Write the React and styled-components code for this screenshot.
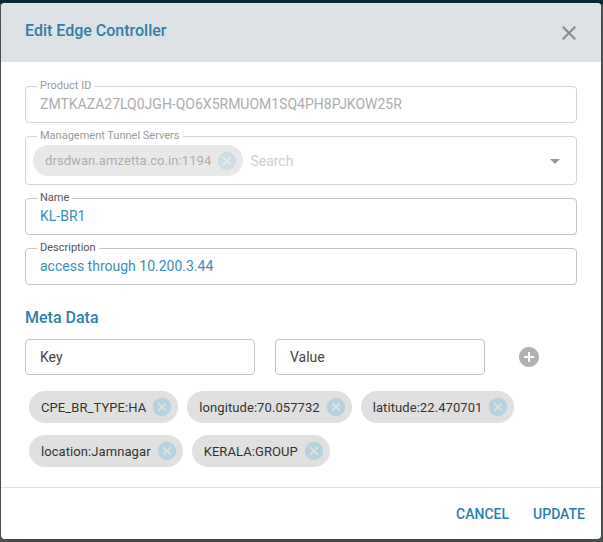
import React from "react";
import styled, { createGlobalStyle } from "styled-components";

const GlobalStyle = createGlobalStyle`
  html, body { margin: 0; padding: 0; }
  body { font-family: Roboto, "Liberation Sans", Arial, sans-serif; }
  * { box-sizing: border-box; }
`;

const Backdrop = styled.div`
  width: 603px;
  height: 542px;
  padding: 3px 2px 3px 1px;
  background: linear-gradient(to bottom, #0c2737 0, #0c2737 4px, #4d5154 4px);
  display: flex;
`;

const Dialog = styled.div`
  flex: 1;
  background: #fff;
  border-radius: 4px;
  overflow: hidden;
  display: flex;
  flex-direction: column;
  box-shadow: 0 11px 15px -7px rgba(0, 0, 0, 0.2);
`;

const Header = styled.div`
  height: 59px;
  background: #dde2e6;
  display: flex;
  align-items: center;
  justify-content: space-between;
  padding: 0 20px 0 24px;
`;

const Title = styled.h2`
  margin: 0;
  font-size: 16px;
  font-weight: 500;
  color: #2f7eab;
  padding-bottom: 4px;
`;

const IconButton = styled.button`
  border: 0;
  background: none;
  padding: 0;
  display: flex;
  color: ${({ color }) => color || "#8a8a8a"};
  cursor: pointer;
`;

const Body = styled.div`
  flex: 1;
  padding: 18px 24px 0 24px;
  display: flex;
  flex-direction: column;
`;

const Field = styled.fieldset`
  margin: 0 0 7px 0;
  padding: ${({ $pad }) => $pad || "2px 14px 10px 14px"};
  border: 1px solid ${({ disabled }) => (disabled ? "#d4d4d4" : "#c4c4c4")};
  border-radius: 4px;
  min-width: 0;
`;

const Legend = styled.legend`
  margin-left: ${({ $shift }) => $shift || "-3px"};
  padding: 0 3px;
  font-size: 11px;
  line-height: 12px;
  color: ${({ $muted }) => ($muted ? "#9a9a9a" : "#555")};
`;

const Value = styled.div`
  font-size: 14px;
  line-height: 18px;
  padding-top: 1px;
  margin-bottom: -1px;
  color: ${({ $muted }) => ($muted ? "#adadad" : "#3b8dba")};
  white-space: nowrap;
  overflow: hidden;
`;

const AutoRow = styled.div`
  display: flex;
  align-items: center;
  gap: 7px;
`;

const Chip = styled.div`
  display: inline-flex;
  align-items: center;
  height: ${({ $h }) => $h || "32px"};
  border-radius: 16px;
  background: ${({ $muted }) => ($muted ? "#e8e8e8" : "#e0e0e0")};
  padding-left: 12px;
  font-size: 13px;
  letter-spacing: 0.08px;
  color: ${({ $muted }) => ($muted ? "#adadad" : "#333")};
  white-space: nowrap;
  svg {
    margin: 0 5px 0 5px;
    color: ${({ $muted }) => ($muted ? "#cddde6" : "#b6d3e0")};
  }
`;

const Search = styled.span`
  flex: 1;
  font-size: 14px;
  color: #cfcfcf;
`;

const Arrow = styled.span`
  display: flex;
  color: #999;
  margin-right: -6px;
`;

const SectionTitle = styled.h3`
  margin: 16px 0 11px 0;
  font-size: 16px;
  line-height: 20px;
  font-weight: 500;
  color: #2f7eab;
`;

const InputRow = styled.div`
  display: flex;
  align-items: center;
`;

const Input = styled.input`
  width: ${({ $w }) => $w}px;
  height: 36px;
  margin-right: ${({ $mr }) => $mr || 0}px;
  border: 1px solid #c4c4c4;
  border-radius: 4px;
  padding: 0 14px;
  font-family: inherit;
  font-size: 14px;
  color: #333;
  outline: none;
  &::placeholder { color: #444; }
`;

const ChipList = styled.div`
  display: flex;
  flex-wrap: wrap;
  gap: 12px 9px;
  padding: 16px 60px 0 4px;
`;

const Footer = styled.div`
  border-top: 1px solid #e0e0e0;
  height: 52px;
  margin-top: auto;
  padding: 8px;
  display: flex;
  justify-content: flex-end;
  align-items: center;
  gap: 8px;
`;

const TextButton = styled.button`
  border: 0;
  background: none;
  height: 36px;
  padding: 6px 8px;
  font-family: inherit;
  font-size: 14px;
  font-weight: 500;
  text-transform: uppercase;
  color: #2b7eac;
  cursor: pointer;
`;

const Icon = ({ d, size = 24 }) => (
  <svg width={size} height={size} viewBox="0 0 24 24" fill="currentColor">
    <path d={d} />
  </svg>
);

const CANCEL =
  "M12 2C6.47 2 2 6.47 2 12s4.47 10 10 10 10-4.47 10-10S17.53 2 12 2zm5 13.59L15.59 17 12 13.41 8.41 17 7 15.59 10.59 12 7 8.41 8.41 7 12 10.59 15.59 7 17 8.41 13.41 12 17 15.59z";
const ADD =
  "M12 2C6.48 2 2 6.48 2 12s4.48 10 10 10 10-4.48 10-10S17.52 2 12 2zm5 11h-4v4h-2v-4H7v-2h4V7h2v4h4v2z";
const CLOSE =
  "M19 6.41L17.59 5 12 10.59 6.41 5 5 6.41 10.59 12 5 17.59 6.41 19 12 13.41 17.59 19 19 17.59 13.41 12z";
const DROP = "M7 10l5 5 5-5z";

const meta = [
  "CPE_BR_TYPE:HA",
  "longitude:70.057732",
  "latitude:22.470701",
  "location:Jamnagar",
  "KERALA:GROUP",
];

export default function App() {
  return (
    <>
      <GlobalStyle />
      <Backdrop>
        <Dialog>
          <Header>
            <Title>Edit Edge Controller</Title>
            <IconButton aria-label="close">
              <Icon d={CLOSE} />
            </IconButton>
          </Header>
          <Body>
            <Field disabled>
              <Legend $muted>Product ID</Legend>
              <Value $muted>ZMTKAZA27LQ0JGH-QO6X5RMUOM1SQ4PH8PJKOW25R</Value>
            </Field>
            <Field disabled $pad="3px 15px 8px 7px">
              <Legend $muted $shift="4px">Management Tunnel Servers</Legend>
              <AutoRow>
                <Chip $muted $h="31px">
                  drsdwan.amzetta.co.in:1194
                  <Icon d={CANCEL} size={22} />
                </Chip>
                <Search>Search</Search>
                <Arrow>
                  <Icon d={DROP} />
                </Arrow>
              </AutoRow>
            </Field>
            <Field>
              <Legend>Name</Legend>
              <Value>KL-BR1</Value>
            </Field>
            <Field>
              <Legend>Description</Legend>
              <Value>access through 10.200.3.44</Value>
            </Field>
            <SectionTitle>Meta Data</SectionTitle>
            <InputRow>
              <Input $w={230} $mr={20} placeholder="Key" />
              <Input $w={210} $mr={32} placeholder="Value" />
              <IconButton color="#b0b0b0" aria-label="add">
                <Icon d={ADD} />
              </IconButton>
            </InputRow>
            <ChipList>
              {meta.map((m) => (
                <Chip key={m}>
                  {m}
                  <Icon d={CANCEL} size={22} />
                </Chip>
              ))}
            </ChipList>
          </Body>
          <Footer>
            <TextButton>Cancel</TextButton>
            <TextButton>Update</TextButton>
          </Footer>
        </Dialog>
      </Backdrop>
    </>
  );
}
